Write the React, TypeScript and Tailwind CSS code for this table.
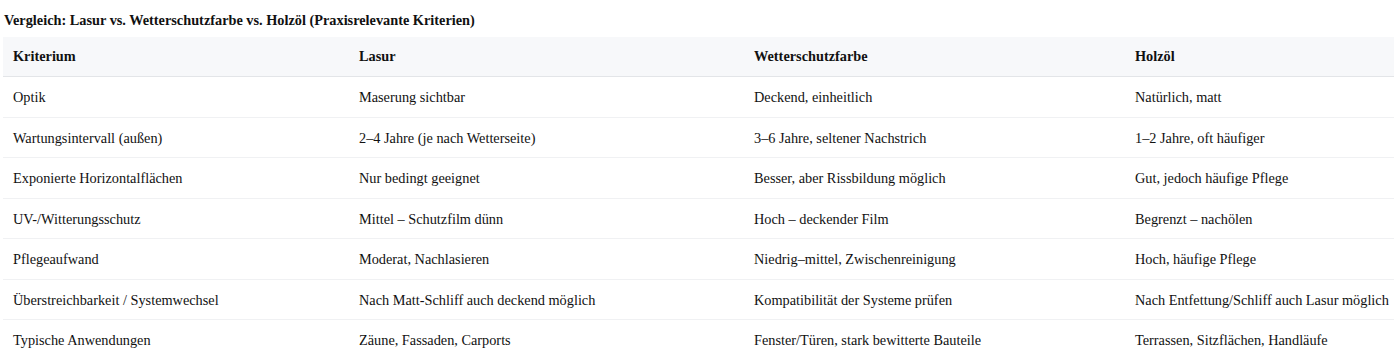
import React from "react";

const rows: string[][] = [
  ["Optik", "Maserung sichtbar", "Deckend, einheitlich", "Natürlich, matt"],
  ["Wartungsintervall (außen)", "2–4 Jahre (je nach Wetterseite)", "3–6 Jahre, seltener Nachstrich", "1–2 Jahre, oft häufiger"],
  ["Exponierte Horizontalflächen", "Nur bedingt geeignet", "Besser, aber Rissbildung möglich", "Gut, jedoch häufige Pflege"],
  ["UV-/Witterungsschutz", "Mittel – Schutzfilm dünn", "Hoch – deckender Film", "Begrenzt – nachölen"],
  ["Pflegeaufwand", "Moderat, Nachlasieren", "Niedrig–mittel, Zwischenreinigung", "Hoch, häufige Pflege"],
  ["Überstreichbarkeit / Systemwechsel", "Nach Matt-Schliff auch deckend möglich", "Kompatibilität der Systeme prüfen", "Nach Entfettung/Schliff auch Lasur möglich"],
  ["Typische Anwendungen", "Zäune, Fassaden, Carports", "Fenster/Türen, stark bewitterte Bauteile", "Terrassen, Sitzflächen, Handläufe"],
];

export default function App() {
  return (
    <div className="px-[4px] pt-[11px] text-[14.3px] leading-[19.5px] text-[#111] font-['Liberation_Serif','Times_New_Roman',serif]">
      <div className="font-bold mb-[6px]">
        Vergleich: Lasur vs. Wetterschutzfarbe vs. Holzöl (Praxisrelevante Kriterien)
      </div>
      <table className="table-fixed border-collapse w-[1391px] -ml-px text-left">
        <colgroup>
          <col className="w-[346px]" />
          <col className="w-[395px]" />
          <col className="w-[381px]" />
          <col className="w-[269px]" />
        </colgroup>
        <thead>
          <tr className="bg-[#f7f8fa] border-b border-[#e3e5e8]">
            {["Kriterium", "Lasur", "Wetterschutzfarbe", "Holzöl"].map((h) => (
              <th key={h} className="font-bold pl-[10px] pr-2 pt-[10px] pb-[10px] whitespace-nowrap">
                {h}
              </th>
            ))}
          </tr>
        </thead>
        <tbody>
          {rows.map((r, i) => (
            <tr key={i} className="border-b border-[#f0f1f3]">
              {r.map((c, j) => (
                <td key={j} className="font-normal pl-[10px] pr-2 pt-[11px] pb-[9px] whitespace-nowrap">
                  {c}
                </td>
              ))}
            </tr>
          ))}
        </tbody>
      </table>
    </div>
  );
}
